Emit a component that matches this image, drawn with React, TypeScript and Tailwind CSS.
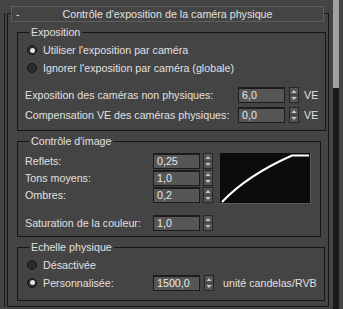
import type { ReactNode } from 'react';

const Radio = ({ checked }: { checked?: boolean }) => (
    <span className="w-[10px] h-[10px] rounded-full bg-[#2a2a2a] border border-[#161616] flex items-center justify-center shrink-0">
        {checked && <span className="w-[5px] h-[5px] rounded-full bg-[#e4e4e4]" />}
    </span>
);

const Spinner = () => (
    <svg width="10" height="16" viewBox="0 0 10 16" className="shrink-0">
        <rect x="0.5" y="0.5" width="9" height="15" fill="#555" stroke="#262626" />
        <line x1="1" y1="8" x2="9" y2="8" stroke="#3a3a3a" />
        <polygon points="2.5,6 7.5,6 5,3" fill="#c8c8c8" />
        <polygon points="2.5,10 7.5,10 5,13" fill="#c8c8c8" />
    </svg>
);

const NumInput = ({ value }: { value: string }) => (
    <div className="w-[47px] h-[16px] bg-[#565656] border border-[#1c1c1c] border-t-2 pl-[3px] flex items-center text-[#e8e8e8] leading-none shrink-0">
        {value}
    </div>
);

const Group = ({ title, className, children }: { title: string; className?: string; children: ReactNode }) => (
    <fieldset className={`ml-[9px] w-[304px] border border-[#161616] px-[7px] ${className ?? ''}`}>
        <legend className="ml-[4px] px-[2px] h-[14px] leading-[14px]">{title}</legend>
        {children}
    </fieldset>
);

const Curve = () => (
    <svg width="91" height="51" viewBox="0 0 91 51" className="ml-[7px] shrink-0">
        <rect x="0" y="0" width="91" height="51" fill="#0c0c0c" />
        <line x1="90.5" y1="0" x2="90.5" y2="51" stroke="#5a5a5a" />
        <line x1="0" y1="50.5" x2="91" y2="50.5" stroke="#5a5a5a" />
        <path d="M2 49 Q27 22.5 72 2.5 L89 2.5" fill="none" stroke="#fff" strokeWidth="2" />
    </svg>
);

export default function App() {
    const imageRows = [
        { label: 'Reflets:', value: '0,25' },
        { label: 'Tons moyens:', value: '1,0' },
        { label: 'Ombres:', value: '0,2' },
    ];

    return (
        <div className="w-[343px] h-[309px] bg-[#444] flex overflow-hidden font-['Liberation_Sans',Arial,sans-serif] text-[10.7px] text-[#e0e0e0] whitespace-nowrap">
            <div className="w-[329px] h-full pl-[4px] pt-[13px]">
                <div className="h-[294px] border-l border-[#1e1e1e] pl-[2px]">
                    <div className="h-full border border-[#161616]">
                        <div className="-mt-[8px] ml-[3px] w-[313px] h-[16px] border border-[#5e5e5e] bg-[#444] flex items-center relative">
                            <span className="pl-[4px] w-[16px]">-</span>
                            <span className="flex-1 text-center pr-[16px]">Contrôle d'exposition de la caméra physique</span>
                        </div>

                        <Group title="Exposition" className="mt-[3px] pb-[7px]">
                            <div className="pt-[2px]">
                                <div className="h-[18px] flex items-center gap-[6px] pl-[2px]">
                                    <Radio checked />
                                    <span>Utiliser l'exposition par caméra</span>
                                </div>
                                <div className="h-[18px] flex items-center gap-[6px] pl-[2px]">
                                    <Radio />
                                    <span>Ignorer l'exposition par caméra (globale)</span>
                                </div>
                            </div>
                            <div className="mt-[10px] h-[16px] flex items-center">
                                <span className="w-[213px] shrink-0">Exposition des caméras non physiques:</span>
                                <NumInput value="6,0" />
                                <span className="ml-[4px]"><Spinner /></span>
                                <span className="ml-[5px]">VE</span>
                            </div>
                            <div className="mt-[4px] h-[16px] flex items-center">
                                <span className="w-[213px] shrink-0">Compensation VE des caméras physiques:</span>
                                <NumInput value="0,0" />
                                <span className="ml-[4px]"><Spinner /></span>
                                <span className="ml-[5px]">VE</span>
                            </div>
                        </Group>

                        <Group title="Contrôle d'image" className="mt-[3px] pb-[5px]">
                            <div className="pt-[5px] flex items-start">
                                <div className="flex flex-col gap-[1px]">
                                    {imageRows.map((r) => (
                                        <div key={r.label} className="h-[16px] flex items-center">
                                            <span className="w-[128px] shrink-0">{r.label}</span>
                                            <NumInput value={r.value} />
                                            <span className="ml-[3px]"><Spinner /></span>
                                        </div>
                                    ))}
                                </div>
                                <Curve />
                            </div>
                            <div className="mt-[11px] h-[16px] flex items-center">
                                <span className="w-[128px] shrink-0">Saturation de la couleur:</span>
                                <NumInput value="1,0" />
                                <span className="ml-[3px]"><Spinner /></span>
                            </div>
                        </Group>

                        <Group title="Echelle physique" className="mt-[3px] pb-[8px]">
                            <div className="pt-[2px]">
                                <div className="h-[18px] flex items-center gap-[6px] pl-[2px]">
                                    <Radio />
                                    <span>Désactivée</span>
                                </div>
                                <div className="h-[18px] flex items-center">
                                    <span className="w-[128px] shrink-0 flex items-center gap-[6px] pl-[2px]">
                                        <Radio checked />
                                        <span>Personnalisée:</span>
                                    </span>
                                    <NumInput value="1500,0" />
                                    <span className="ml-[4px]"><Spinner /></span>
                                    <span className="ml-[9px]">unité candelas/RVB</span>
                                </div>
                            </div>
                        </Group>
                    </div>
                </div>
            </div>
            <div className="w-[14px] h-full flex">
                <div className="w-[4px] bg-[#444]" />
                <div className="w-[6px] h-full bg-[#1a1a1a] flex flex-col">
                    <div className="h-[88px] bg-[#a0a0a0]" />
                </div>
                <div className="w-[4px] bg-[#444]" />
            </div>
        </div>
    );
}
